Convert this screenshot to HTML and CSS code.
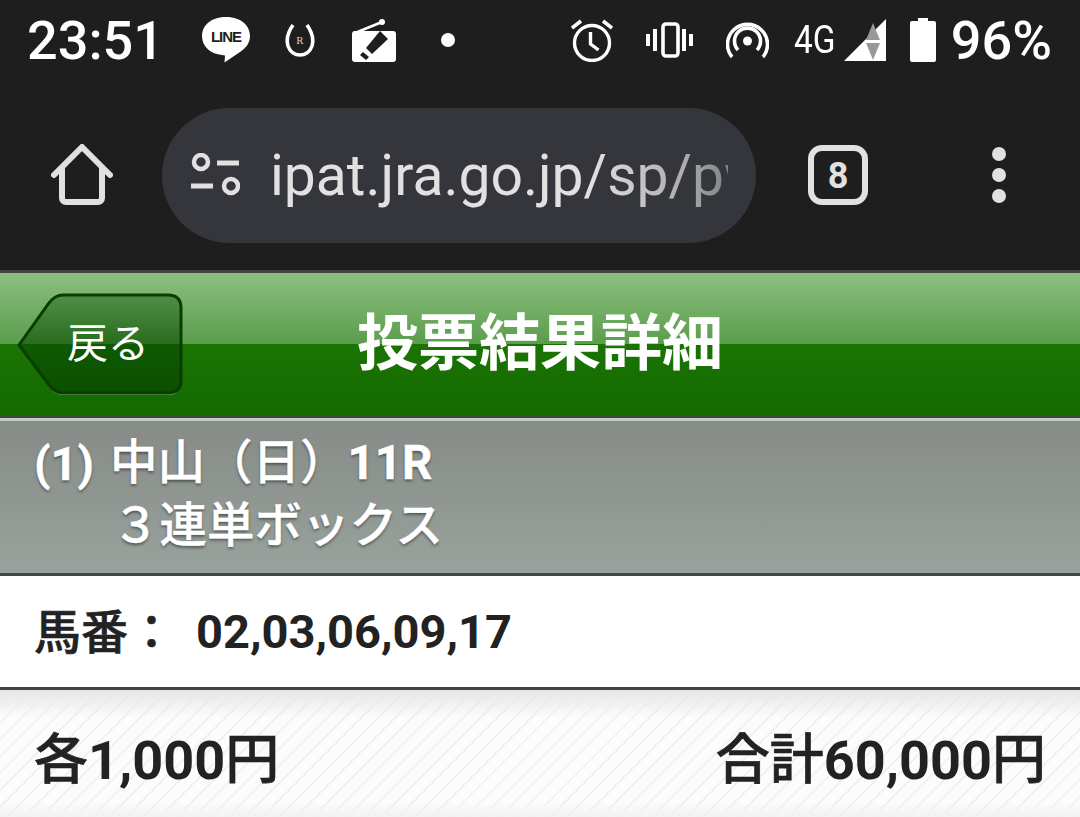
FILE: index.html
```html
<!DOCTYPE html>
<html lang="ja">
  <head>
    <meta charset="UTF-8" />
    <title>投票結果詳細</title>
    <link rel="stylesheet" href="styles.css">
  </head>
  <body>
    <div class="statusbar">
      <span class="clock">23:51</span>
      <div class="status-left">
        <svg class="ic-line" width="48" height="46" viewBox="0 0 48 46"><path d="M24 0C11 0 0 7 0 19c0 11 9 18 20 19l3 .5-.5 7L38 35c6-4 10-9 10-16C48 7 37 0 24 0z" fill="#fff"/><text x="24" y="25" class="line-txt" text-anchor="middle">LINE</text></svg>
        <svg class="ic-shoe" width="30" height="33" viewBox="0 0 30 33"><path d="M8 1C3 8 1 15 3 22c2 6 7 9 12 9s10-3 12-9c2-7 0-14-5-21" fill="none" stroke="#fff" stroke-width="3.6"/><text x="15" y="20" class="shoe-txt" text-anchor="middle">R</text></svg>
        <svg class="ic-radio" width="44" height="43" viewBox="0 0 44 43"><path d="M3 14L30 3" stroke="#fff" stroke-width="2.5"/><circle cx="30" cy="3" r="3" fill="#fff"/><rect x="0" y="12" width="44" height="31" rx="3" fill="#fff"/><path d="M28 12l8 8-16 15-6-6z" fill="#1e1e1e"/><path d="M11 33l6 5-3 3-6-5z" fill="#1e1e1e"/></svg>
        <span class="dot"></span>
      </div>
      <div class="status-right">
        <svg class="ic-alarm" width="42" height="43" viewBox="0 0 42 43"><circle cx="21" cy="24" r="17.5" fill="none" stroke="#fff" stroke-width="3.4"/><path d="M19.500 13v12l8 6" fill="none" stroke="#fff" stroke-width="3.4"/><path d="M1 9l9-7M41 9l-9-7" stroke="#fff" stroke-width="3.6"/></svg>
        <svg class="ic-vibrate" width="47" height="36" viewBox="0 0 47 36"><rect x="17" y="2" width="15" height="32" rx="3" fill="none" stroke="#fff" stroke-width="3.6"/><path d="M9 7v22M38 7v22M2 12v12M45 12v12" stroke="#fff" stroke-width="4"/></svg>
        <svg class="ic-hotspot" width="43" height="38" viewBox="0 0 43 38"><circle cx="21.500" cy="20" r="4.500" fill="#fff"/><path d="M12 29a13 13 0 1 1 19 0" fill="none" stroke="#fff" stroke-width="3.600"/><path d="M6 36a20 20 0 1 1 31 0" fill="none" stroke="#fff" stroke-width="3.600"/></svg>
        <span class="net">4G</span>
        <svg class="ic-signal" width="42" height="42" viewBox="0 0 42 42"><path d="M42 0v42H0z" fill="#fff"/><path d="M29 4l7 17H22z" fill="#999"/><path d="M22 24h14l-7 17z" fill="#999"/></svg>
        <svg class="ic-battery" width="26" height="44" viewBox="0 0 26 44"><path d="M8 0h10v3h6a2 2 0 0 1 2 2v37a2 2 0 0 1-2 2H2a2 2 0 0 1-2-2V5a2 2 0 0 1 2-2h6z" fill="#fff"/></svg>
        <span class="pct">96%</span>
      </div>
    </div>

    <div class="toolbar">
      <svg class="ic-home" width="62" height="62" viewBox="0 0 62 62"><path d="M3 31L31 3l28 28M11 24v30a4 4 0 0 0 4 4h32a4 4 0 0 0 4-4V24" fill="none" stroke="#e1e1e1" stroke-width="6" stroke-linejoin="round" stroke-linecap="round"/></svg>
      <div class="urlbar">
        <svg class="ic-tune" width="50" height="44" viewBox="0 0 50 44"><circle cx="11" cy="9" r="7" fill="none" stroke="#e1e1e1" stroke-width="4.500"/><circle cx="41" cy="33" r="7" fill="none" stroke="#e1e1e1" stroke-width="4.500"/><path d="M27 10h22M1 33h22" stroke="#e1e1e1" stroke-width="5"/></svg>
        <div class="url">ipat.jra.go.jp/sp/pw</div>
      </div>
      <div class="tabs">8</div>
      <div class="menu"><i></i><i></i><i></i></div>
    </div>

    <div class="titlebar">
      <div class="back">
        <svg class="back-shape" width="166" height="104" viewBox="0 0 166 104">
          <defs>
            <linearGradient id="backGrad" x1="0" y1="0" x2="0" y2="1">
              <stop offset="0" stop-color="#4f8f45"/>
              <stop offset=".5" stop-color="#2a6d1f"/>
              <stop offset=".5" stop-color="#0e5a02"/>
              <stop offset="1" stop-color="#0b4f00"/>
            </linearGradient>
          </defs>
          <path d="M2 52L32 10q6-8 14-8h105q13 0 13 13v72q0 13-13 13H46q-8 0-14-8z" fill="#7fb277" transform="translate(0 2)"/>
          <path d="M2 52L32 10q6-8 14-8h105q13 0 13 13v72q0 13-13 13H46q-8 0-14-8z" fill="url(#backGrad)" stroke="#0a3d00" stroke-width="3"/>
        </svg>
        <span class="back-label">戻る</span>
      </div>
      <h1>投票結果詳細</h1>
    </div>

    <div class="race">
      <div class="race-line"><span class="race-no">(1)</span><span class="race-name">中山（日）<b>11R</b></span></div>
      <div class="race-type">３連単ボックス</div>
    </div>

    <div class="horses">
      <span class="horses-label">馬番：</span>
      <span class="horses-nums">02,03,06,09,17</span>
    </div>

    <div class="amounts">
      <span><span class="kanji">各</span>1,000<span class="kanji">円</span></span>
      <span><span class="kanji">合計</span>60,000<span class="kanji">円</span></span>
    </div>
  </body>
</html>
```

FILE: styles.css
```css
html,
body {
  margin: 0;
  padding: 0;
}
body {
  width: 1080px;
  height: 817px;
  overflow: hidden;
  font-family: Roboto, "Noto Sans CJK JP", sans-serif;
  background: #f4f4f4;
}
svg {
  display: block;
  flex: none;
}
.statusbar {
  height: 88px;
  box-sizing: border-box;
  background: #1e1e1e;
  color: #fff;
  display: flex;
  align-items: center;
  padding: 0 28px 8px 27px;
}
.clock {
  font-size: 54px;
  font-weight: 500;
  width: 175px;
}
.status-left {
  display: flex;
  align-items: center;
  gap: 35px;
}
.line-txt {
  font-family: "Liberation Sans", sans-serif;
  font-size: 15px;
  font-weight: 700;
  letter-spacing: -1px;
  fill: #1e1e1e;
}
.shoe-txt {
  font-family: "Liberation Serif", serif;
  font-size: 11px;
  fill: #ccc;
}
.ic-radio {
  margin-left: 2px;
}
.dot {
  width: 14px;
  height: 14px;
  border-radius: 50%;
  background: #fff;
  margin-left: 10px;
}
.status-right {
  margin-left: auto;
  display: flex;
  align-items: center;
}
.ic-vibrate {
  margin-left: 33px;
}
.ic-hotspot {
  margin-left: 33px;
}
.net {
  font-size: 38px;
  margin-left: 25px;
  transform: scaleX(.88);
  width: 50px;
  transform-origin: left center;
}
.ic-battery {
  margin-left: 24px;
}
.pct {
  font-size: 54px;
  font-weight: 500;
  margin-left: 15px;
}
.toolbar {
  height: 182px;
  box-sizing: border-box;
  background: #1e1e1e;
  display: flex;
  align-items: center;
  padding: 0 0 8px 51px;
}
.urlbar {
  width: 594px;
  height: 135px;
  margin-left: 49px;
  border-radius: 68px;
  background: #34363b;
  display: flex;
  align-items: center;
  box-sizing: border-box;
  padding-left: 28px;
}
.url {
  margin-left: 30px;
  width: 458px;
  overflow: hidden;
  white-space: nowrap;
  font-size: 57px;
  color: #e1e1e1;
  -webkit-mask-image: linear-gradient(to right, #000 70%, rgba(0, 0, 0, .7) 90%, rgba(0, 0, 0, .45));
  mask-image: linear-gradient(to right, #000 70%, rgba(0, 0, 0, .7) 90%, rgba(0, 0, 0, .45));
}
.tabs {
  width: 48px;
  height: 48px;
  margin-left: 52px;
  border: 6px solid #e1e1e1;
  border-radius: 14px;
  color: #e1e1e1;
  font-size: 36px;
  font-weight: 700;
  text-align: center;
  line-height: 50px;
}
.menu {
  margin-left: 124px;
  display: flex;
  flex-direction: column;
  gap: 7px;
}
.menu i {
  width: 14px;
  height: 14px;
  border-radius: 50%;
  background: #e1e1e1;
}
.titlebar {
  height: 148px;
  box-sizing: border-box;
  border-top: 3px solid #444;
  border-bottom: 3px solid #444;
  background: linear-gradient(#8dbf80, #5a9d4c 50%, #1a7403 50%, #146a00);
  display: flex;
  align-items: center;
  justify-content: center;
  position: relative;
}
.back {
  position: absolute;
  left: 17px;
  top: 20px;
  width: 166px;
  height: 104px;
}
.back-label {
  position: absolute;
  left: 50px;
  top: 23px;
  font-size: 41px;
  line-height: 56px;
  color: #fff;
}
.titlebar h1 {
  margin: 0;
  font-size: 61px;
  font-weight: 700;
  color: #fff;
  line-height: 1;
}
.race {
  height: 158px;
  box-sizing: border-box;
  border-top: 3px solid #c0cfc6;
  border-bottom: 3px solid #444;
  background: linear-gradient(#878b88, #98a29c);
  color: #fff;
  padding: 11px 0 0 34px;
  font-size: 47.500px;
  font-weight: 500;
  line-height: 63px;
  text-shadow: 0 2px 3px rgba(0, 0, 0, .45);
  -webkit-text-stroke: .4px #fff;
}
.race-line {
  display: flex;
}
.race-no {
  width: 76px;
  font-size: 47px;
  font-weight: 700;
}
.race-type {
  margin-left: 78px;
}
.horses {
  height: 114px;
  box-sizing: border-box;
  border-bottom: 3px solid #444;
  background: #fff;
  color: #222;
  display: flex;
  align-items: center;
  padding-left: 34px;
  font-size: 47px;
  font-weight: 700;
}
.horses-label {
  width: 162px;
  margin-bottom: 6px;
  font-weight: 500;
  -webkit-text-stroke: .6px #222;
}
.amounts {
  height: 127px;
  box-sizing: border-box;
  background:
    linear-gradient(#e6e6e6, rgba(255, 255, 255, 0) 22%, rgba(255, 255, 255, 0) 88%, #f2f2f2),
    repeating-linear-gradient(135deg, #fcfcfc 0 10px, #f1f1f1 10px 12px);
  color: #222;
  display: flex;
  align-items: center;
  justify-content: space-between;
  padding: 4px 34px 0;
  font-size: 54px;
  font-weight: 700;
}
.kanji {
  font-weight: 500;
  -webkit-text-stroke: .6px #222;
}
```
